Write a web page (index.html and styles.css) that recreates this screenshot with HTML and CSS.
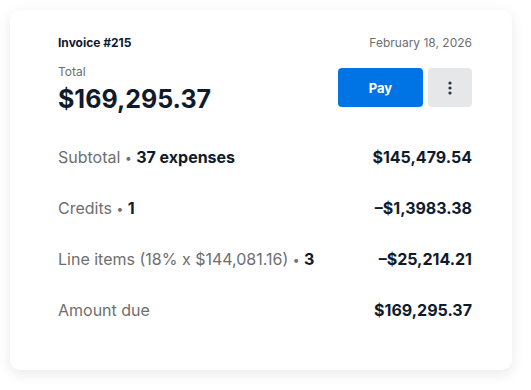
FILE: index.html
```html
<!DOCTYPE html>
<html lang="en">
<head>
    <meta charset="UTF-8">
    <meta name="viewport" content="width=device-width, initial-scale=1.0">
    <link rel="stylesheet" href="styles.css">
    <title>Invoice #215</title>
</head>
<body>

    <div class="card">
        <div class="card-head">
            <span class="invoice-id">Invoice #215</span>
            <span class="invoice-date">February 18, 2026</span>
        </div>

        <div class="total-row">
            <div>
                <div class="total-label">Total</div>
                <div class="total-amount">$169,295.37</div>
            </div>
            <div class="actions">
                <button class="pay-btn">Pay</button>
                <button class="more-btn" aria-label="More">
                    <svg width="4" height="14" viewBox="0 0 4 14"><circle cx="2" cy="2" r="1.6" fill="#2b3440"/><circle cx="2" cy="7" r="1.6" fill="#2b3440"/><circle cx="2" cy="12" r="1.6" fill="#2b3440"/></svg>
                </button>
            </div>
        </div>

        <div class="lines">
            <div class="line">
                <span class="line-label">Subtotal <span class="dot">•</span> <b>37 expenses</b></span>
                <span class="line-value">$145,479.54</span>
            </div>
            <div class="line">
                <span class="line-label">Credits <span class="dot">•</span> <b>1</b></span>
                <span class="line-value">–$1,3983.38</span>
            </div>
            <div class="line">
                <span class="line-label">Line items (18% x $144,081.16) <span class="dot">•</span> <b>3</b></span>
                <span class="line-value">–$25,214.21</span>
            </div>
            <div class="line">
                <span class="line-label">Amount due</span>
                <span class="line-value">$169,295.37</span>
            </div>
        </div>
    </div>

</body>
</html>
```

FILE: styles.css
```css
body {
    font-family: Inter, "Liberation Sans", sans-serif;
    margin: 0;
    padding: 10px 19px 20px 10px;
    background-color: #fff;
    color: #0f1b2d;
}

.card {
    background-color: #fff;
    border-radius: 10px;
    box-shadow: 0 4px 14px rgba(0, 0, 0, 0.09);
    padding: 25px 40px 35px 48px;
}

.card-head {
    display: flex;
    justify-content: space-between;
    align-items: center;
    line-height: 16px;
}

.invoice-id {
    font-size: 12px;
    font-weight: 700;
}

.invoice-date {
    font-size: 12px;
    color: #6e6e6e;
}

.total-row {
    display: flex;
    justify-content: space-between;
    align-items: center;
    margin-top: 13px;
}

.total-label {
    font-size: 12px;
    line-height: 16px;
    color: #6e6e6e;
}

.total-amount {
    font-size: 25px;
    font-weight: 700;
    line-height: 30px;
    margin-top: 4px;
}

.actions {
    display: flex;
    gap: 5px;
    margin-top: -3px;
}

.actions button {
    height: 39px;
    border: none;
    border-radius: 4px;
    cursor: pointer;
    font-family: inherit;
}

.pay-btn {
    width: 85px;
    background-color: #0074e4;
    color: #fff;
    font-size: 13px;
    font-weight: 700;
}

.more-btn {
    width: 44px;
    background-color: #e6e7e9;
    display: flex;
    align-items: center;
    justify-content: center;
}

.lines {
    margin-top: 17px;
}

.line {
    display: flex;
    justify-content: space-between;
    align-items: center;
    height: 51px;
    font-size: 16px;
}

.line-label {
    color: #6e6e6e;
}

.line-label b {
    color: #0f1b2d;
}

.dot {
    font-size: 12px;
    vertical-align: 1px;
}

.line-value {
    font-weight: 700;
}
```
